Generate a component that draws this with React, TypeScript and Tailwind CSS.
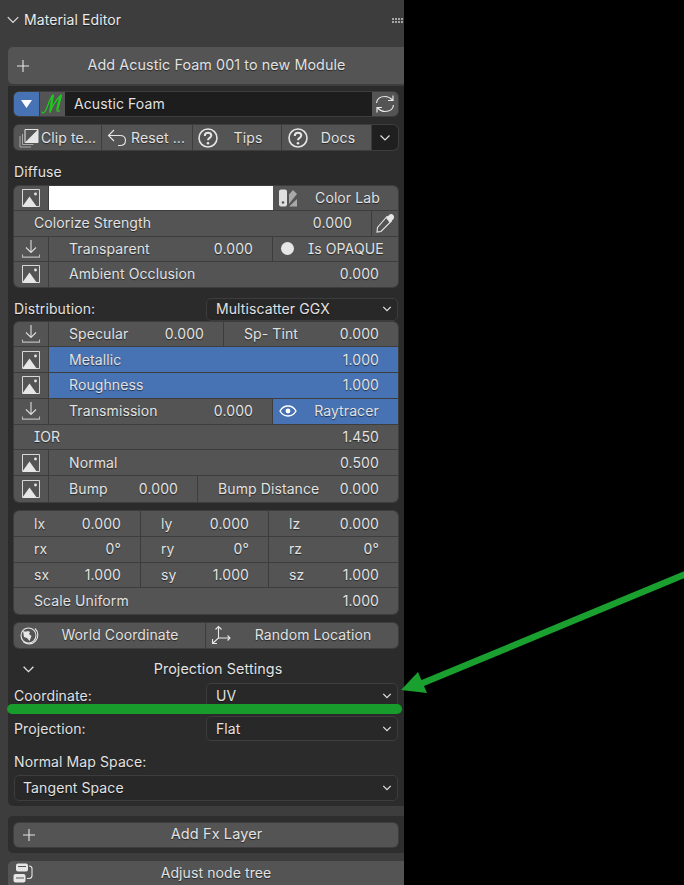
import { ReactNode } from "react"

const shadow = "[text-shadow:0_1px_1px_rgba(0,0,0,0.55)]"

const ImageIcon = () => (
    <svg width="18" height="18" viewBox="0 0 18 18" fill="none">
        <path d="M.5 17V.5h17v17h-4" stroke="#e6e6e6" strokeWidth="1" opacity="0.9" />
        <path d="M0 18 L7.500 7.500 L15 18 Z" fill="#e6e6e6" />
        <circle cx="13.500" cy="5" r="1.400" fill="#e6e6e6" />
    </svg>
)

const ImportIcon = () => (
    <svg width="20" height="20" viewBox="0 0 20 20" fill="none" stroke="#dcdcdc" strokeWidth="1.1">
        <path d="M10 1V13M5 8.500 10 13.500l5-5" />
        <path d="M1.500 15.500v2.600h17v-2.600" opacity="0.75" />
    </svg>
)

const HelpIcon = () => (
    <svg width="20" height="20" viewBox="0 0 20 20" fill="none" stroke="#e6e6e6" strokeWidth="1.6">
        <circle cx="10" cy="10" r="9" />
        <path d="M6.800 8c0-2 1.400-3.200 3.300-3.200s3.200 1.200 3.200 2.800c0 2.300-3.300 2.300-3.300 4.700" strokeWidth="2" />
        <circle cx="10" cy="15.200" r="1.300" fill="#e6e6e6" stroke="none" />
    </svg>
)

const Chevron = ({ size = 12, sw = 1.3 }: { size?: number; sw?: number }) => (
    <svg width={size} height={size} viewBox="0 0 12 12" fill="none" stroke="#e0e0e0" strokeWidth={sw}>
        <path d="M1.500 3.500 6 8l4.500-4.500" />
    </svg>
)

const Plus = () => (
    <svg width="12" height="12" viewBox="0 0 12 12" stroke="#e6e6e6" strokeWidth="1.1">
        <path d="M6 0v12M0 6h12" />
    </svg>
)

function Field({ label, value, className = "flex-1", active }: { label: string; value: string; className?: string; active?: boolean }) {
    return (
        <div className={`${className} flex h-full min-w-0 items-center justify-between pl-[20px] pr-[19px] ${active ? "bg-[#4772b3]" : ""}`}>
            <span>{label}</span>
            <span>{value}</span>
        </div>
    )
}

function IconCell({ children }: { children: ReactNode }) {
    return <div className="flex h-full w-[35px] shrink-0 items-center justify-center border-r border-[#3d3d3d]">{children}</div>
}

function Row({ h, last, children }: { h: string; last?: boolean; children: ReactNode }) {
    return <div className={`flex items-center bg-[#545454] ${h} ${last ? "" : "border-b border-[#3d3d3d]"}`}>{children}</div>
}

function Group({ className = "", children }: { className?: string; children: ReactNode }) {
    return <div className={`mx-[6px] overflow-hidden rounded-[5px] shadow-[0_0_0_1px_#3d3d3d] ${className}`}>{children}</div>
}

function Select({ value, className = "" }: { value: string; className?: string }) {
    return (
        <div className={`flex items-center justify-between rounded-[5px] border border-[#3d3d3d] bg-[#282828] pl-[9px] pr-[5px] ${className}`}>
            <span>{value}</span>
            <Chevron size={10} sw={1.5} />
        </div>
    )
}

function ToolButton({ icon, text, className, textClass }: { icon: ReactNode; text: string; className: string; textClass: string }) {
    return (
        <div className={`flex h-full items-center border-r border-[#3d3d3d] pl-[5px] ${className}`}>
            <span className="w-[20px] shrink-0">{icon}</span>
            <span className={`whitespace-nowrap ${textClass}`}>{text}</span>
        </div>
    )
}

export default function App() {
    return (
        <div className={`relative h-[885px] w-[684px] overflow-hidden bg-black font-[family-name:Inter,sans-serif] text-[14px] leading-none tracking-[0.1px] text-[#e2e2e2] [font-feature-settings:'cv08'] ${shadow}`}>
            <div className="flex h-full w-[404px] flex-col bg-[#3d3d3d] pl-[8px]">
                {/* panel header */}
                <div className="-ml-[8px] flex h-[40px] shrink-0 items-center pl-[6px] pr-[1px]">
                    <Chevron size={14} sw={1} />
                    <span className="ml-[4px] text-[14px] text-[#ececec]">Material Editor</span>
                    <div className="ml-auto grid grid-cols-4 gap-[1px]">
                        {Array.from({ length: 8 }).map((_, i) => (
                            <span key={i} className="h-[2px] w-[2px] bg-[#a5a5a5]" />
                        ))}
                    </div>
                </div>

                <div className="mt-[7px] flex h-[37px] shrink-0 items-center rounded-l-[5px] bg-[#545454] pl-[9px]">
                    <Plus />
                    <span className="flex-1 text-center text-[14.300px]">Add Acustic Foam 001 to new Module</span>
                </div>

                <div className="mt-[2px] flex h-[720px] shrink-0 flex-col rounded-bl-[5px] bg-[#2b2b2b] pt-[6px]">
                    {/* material name */}
                    <div className="mx-[6px] flex h-[24px] shrink-0 overflow-hidden rounded-[5px] bg-[#545454] shadow-[0_0_0_1px_#3d3d3d]">
                        <div className="flex w-[25px] items-center justify-center bg-[#4772b3]">
                            <svg width="11" height="8" viewBox="0 0 11 8"><path d="M0 0h11L5.500 8z" fill="#fff" /></svg>
                        </div>
                        <div className="flex w-[26px] items-center justify-center border-l border-[#3d3d3d]">
                            <svg width="23" height="22" viewBox="0 0 23 22" fill="none" stroke="#1ec81e" strokeWidth="1.300" strokeLinecap="round">
                                <path d="M1 19c.5 1.500 2 1 3-.5C7 14 8 6 12 2c-1.500 5-2.500 10-3 17" />
                                <path d="M9 19c2-5 6-12 11-17-1.500 4-3.500 10-4 15 0 1.500 1 2 2.500 .5" />
                                <path d="M12 2.500 9.500 17M20 2.500 16.500 16" strokeWidth="2" />
                            </svg>
                        </div>
                        <div className="flex flex-1 items-center bg-[#1d1d1d] pl-[9px]">Acustic Foam</div>
                        <div className="flex w-[26px] items-center justify-center">
                            <svg width="20" height="20" viewBox="0 0 20 20" fill="none" stroke="#e6e6e6" strokeWidth="1.2">
                                <path d="M1.500 9C2 5 5 2.500 10 2.500c3 0 5 1 7.500 3.500M18 1.500V6.500H13" />
                                <path d="M18.500 11C18 15 15 17.500 10 17.500c-3 0-5-1-7.500-3.500M2 18.500V13.500H7" />
                            </svg>
                        </div>
                    </div>

                    {/* tool buttons */}
                    <div className="mx-[6px] mt-[9px] flex h-[25px] shrink-0 overflow-hidden rounded-[5px] bg-[#545454] shadow-[0_0_0_1px_#3d3d3d]">
                        <ToolButton
                            className="w-[88px]"
                            textClass="ml-[2px]"
                            text="Clip te..."
                            icon={
                                <svg width="20" height="20" viewBox="0 0 20 20" fill="none" stroke="#cfcfcf" strokeWidth="1">
                                    <path d="M1 8v11h11M3.500 6v10.500h11" opacity="0.7" />
                                    <path d="M6 1.500h13v13H6z" fill="#545454" stroke="#e6e6e6" />
                                    <path d="M6 14.500 19 1.500v13z" fill="#e6e6e6" stroke="none" />
                                </svg>
                            }
                        />
                        <ToolButton
                            className="w-[91px]"
                            textClass="ml-[4px]"
                            text="Reset ..."
                            icon={
                                <svg width="20" height="20" viewBox="0 0 20 20" fill="none" stroke="#e6e6e6" strokeWidth="1.1">
                                    <path d="M7 2 1.500 7.500 7 13M1.500 7.500H13c3.500 0 5.500 2 5.500 5s-2 5-5.500 5h-2" />
                                </svg>
                            }
                        />
                        <ToolButton className="w-[89px]" textClass="flex-1 pr-[3px] text-center" text="Tips" icon={<HelpIcon />} />
                        <ToolButton className="w-[90px] pl-[6px]" textClass="flex-1 pr-[3px] text-center" text="Docs" icon={<HelpIcon />} />
                        <div className="flex flex-1 items-center justify-center bg-[#1f1f1f]">
                            <Chevron size={12} sw={1.2} />
                        </div>
                    </div>

                    <div className="ml-[6px] mt-[15px] flex h-[14px] shrink-0 items-center">Diffuse</div>

                    <Group className="mt-[7px] shrink-0">
                        <Row h="h-[25.250px]">
                            <IconCell><ImageIcon /></IconCell>
                            <div className="h-full w-[224px] bg-white" />
                            <div className="flex h-full flex-1 items-center pl-[5px]">
                                <svg width="20" height="20" viewBox="0 0 20 20">
                                    <rect x="1" y="1.500" width="8" height="17" rx="2" fill="#e0e0e0" />
                                    <circle cx="5" cy="14.500" r="1.300" fill="#545454" />
                                    <path d="M11 6.500 15 2l4 4-8 10z" fill="#a8a8a8" />
                                    <path d="M11 18.500 19 11v7.500z" fill="#a8a8a8" />
                                </svg>
                                <span className="flex-1 pr-[1px] text-center">Color Lab</span>
                            </div>
                        </Row>
                        <Row h="h-[25.250px]">
                            <div className="flex h-full flex-1 items-center justify-between border-r border-[#3d3d3d] pl-[20px] pr-[19px]">
                                <span>Colorize Strength</span>
                                <span>0.000</span>
                            </div>
                            <div className="flex w-[26px] items-center justify-center">
                                <svg width="20" height="20" viewBox="0 0 20 20" fill="none">
                                    <path d="M12 3.500 16.500 8 6 18.500 2 19l.5-4.500z" stroke="#e6e6e6" strokeWidth="1.100" />
                                    <path d="M11 5c2-1 3-4 5-4s3.500 2 3 4-3 2.500-4 5z" fill="#e6e6e6" />
                                </svg>
                            </div>
                        </Row>
                        <Row h="h-[25.250px]">
                            <IconCell><ImportIcon /></IconCell>
                            <Field label="Transparent" value="0.000" className="w-[224px] shrink-0 border-r border-[#3d3d3d]" />
                            <div className="flex flex-1 items-center pl-[8px]">
                                <span className="h-[13px] w-[13px] rounded-full bg-[#e6e6e6]" />
                                <span className="ml-[14px]">Is OPAQUE</span>
                            </div>
                        </Row>
                        <Row h="h-[25.250px]" last>
                            <IconCell><ImageIcon /></IconCell>
                            <Field label="Ambient Occlusion" value="0.000" />
                        </Row>
                    </Group>

                    <div className="mx-[6px] mt-[10.500px] flex h-[23.500px] shrink-0 items-center">
                        <span className="w-[192px]">Distribution:</span>
                        <Select value="Multiscatter GGX" className="h-full flex-1" />
                    </div>

                    <Group className="mt-[.5px] shrink-0">
                        <Row h="h-[25.800px]">
                            <IconCell><ImportIcon /></IconCell>
                            <Field label="Specular" value="0.000" className="w-[175px] shrink-0 border-r border-[#3d3d3d]" />
                            <Field label="Sp- Tint" value="0.000" />
                        </Row>
                        <Row h="h-[25.800px]">
                            <IconCell><ImageIcon /></IconCell>
                            <Field label="Metallic" value="1.000" active />
                        </Row>
                        <Row h="h-[25.800px]">
                            <IconCell><ImageIcon /></IconCell>
                            <Field label="Roughness" value="1.000" active />
                        </Row>
                        <Row h="h-[25.800px]">
                            <IconCell><ImportIcon /></IconCell>
                            <Field label="Transmission" value="0.000" className="w-[224px] shrink-0 border-r border-[#3d3d3d]" />
                            <div className="flex h-full flex-1 items-center bg-[#4772b3] pl-[6px]">
                                <svg width="18" height="14" viewBox="0 0 18 14" fill="none" stroke="#fff" strokeWidth="1.400">
                                    <path d="M1 7c2-3.500 5-5 8-5s6 1.500 8 5c-2 3.500-5 5-8 5S3 10.500 1 7z" />
                                    <circle cx="9" cy="7" r="2.400" fill="#fff" stroke="none" />
                                </svg>
                                <span className="flex-1 pr-[2px] text-center">Raytracer</span>
                            </div>
                        </Row>
                        <Row h="h-[25.800px]">
                            <Field label="IOR" value="1.450" />
                        </Row>
                        <Row h="h-[25.800px]">
                            <IconCell><ImageIcon /></IconCell>
                            <Field label="Normal" value="0.500" />
                        </Row>
                        <Row h="h-[25.800px]" last>
                            <IconCell><ImageIcon /></IconCell>
                            <Field label="Bump" value="0.000" className="w-[149px] shrink-0 border-r border-[#3d3d3d]" />
                            <Field label="Bump Distance" value="0.000" />
                        </Row>
                    </Group>

                    <Group className="mt-[9.200px] shrink-0">
                        {[
                            ["lx", "0.000", "ly", "0.000", "lz", "0.000"],
                            ["rx", "0°", "ry", "0°", "rz", "0°"],
                            ["sx", "1.000", "sy", "1.000", "sz", "1.000"],
                        ].map((r) => (
                            <Row key={r[0]} h="h-[25.700px]">
                                <Field label={r[0]} value={r[1]} className="w-[127px] shrink-0 border-r border-[#3d3d3d]" />
                                <Field label={r[2]} value={r[3]} className="w-[128px] shrink-0 border-r border-[#3d3d3d]" />
                                <Field label={r[4]} value={r[5]} />
                            </Row>
                        ))}
                        <Row h="h-[25.700px]" last>
                            <Field label="Scale Uniform" value="1.000" />
                        </Row>
                    </Group>

                    <div className="mx-[6px] mt-[8.500px] flex h-[25px] shrink-0 overflow-hidden rounded-[5px] bg-[#545454] shadow-[0_0_0_1px_#3d3d3d]">
                        <div className="flex h-full w-[192px] items-center border-r border-[#3d3d3d] pl-[5px]">
                            <svg width="20" height="20" viewBox="0 0 20 20" fill="none" stroke="#e6e6e6" strokeWidth="1.100">
                                <path d="M16 3.500A8.800 8.800 0 1 1 4 16.500" />
                                <circle cx="9.500" cy="10.500" r="7.500" />
                                <path d="M4 6c2 .5 3 1 5 0l2 1-1 2 2.500 2-2 5-2.500-3-3-1-.5-3z" fill="#e6e6e6" stroke="none" />
                            </svg>
                            <span className="flex-1 pr-[4px] text-center">World Coordinate</span>
                        </div>
                        <div className="flex h-full flex-1 items-center pl-[5px]">
                            <svg width="20" height="20" viewBox="0 0 20 20" fill="none" stroke="#e6e6e6" strokeWidth="1.100">
                                <path d="M7.500 13V2M4.500 4.500l3-3 3 3M7.500 13H19M16.500 10.500l2.500 2.500-2.500 2.500M7.500 13l-5.500 5M1.500 14v4.500H6" />
                            </svg>
                            <span className="flex-1 pr-[3px] text-center">Random Location</span>
                        </div>
                    </div>

                    <div className="mt-[14.500px] flex h-[14px] shrink-0 items-center pl-[14px]">
                        <Chevron size={13} sw={1.200} />
                        <span className="flex-1 pr-[3px] text-center text-[14.300px]">Projection Settings</span>
                    </div>

                    <div className="mx-[6px] mt-[7px] flex h-[25px] shrink-0 items-center">
                        <span className="w-[192px]">Coordinate:</span>
                        <Select value="UV" className="h-full flex-1" />
                    </div>

                    <div className="mx-[6px] mt-[8px] flex h-[25px] shrink-0 items-center">
                        <span className="w-[192px]">Projection:</span>
                        <Select value="Flat" className="h-full flex-1" />
                    </div>

                    <div className="ml-[6px] mt-[14px] flex h-[14px] shrink-0 items-center">Normal Map Space:</div>
                    <Select value="Tangent Space" className="mx-[6px] mt-[6px] h-[26px] shrink-0 !pl-[8px]" />
                </div>

                <div className="mt-[10px] flex h-[37px] shrink-0 items-center rounded-l-[5px] bg-[#2e2e2e] px-[6px]">
                    <div className="flex h-[24px] flex-1 items-center rounded-[5px] bg-[#545454] pl-[9px] shadow-[0_0_0_1px_#3d3d3d]">
                        <Plus />
                        <span className="flex-1 pb-[1px] text-center text-[14.500px]">Add Fx Layer</span>
                    </div>
                </div>

                <div className="mt-[8px] flex h-[24px] shrink-0 items-center rounded-tl-[5px] bg-[#545454] pl-[5px]">
                    <svg width="20" height="20" viewBox="0 0 20 20" fill="none">
                        <rect x="3" y="0.500" width="12" height="8" rx="2" fill="#e6e6e6" />
                        <rect x="0.500" y="11" width="12" height="8.500" rx="2" fill="#e6e6e6" />
                        <path d="M5 3.500h8M3 15h8" stroke="#545454" strokeWidth="1" />
                        <path d="M16 3c2 0 3 1 3 2.500v7c0 2-1 3-3 3h-2" stroke="#e6e6e6" strokeWidth="1.100" />
                    </svg>
                    <span className="flex-1 pr-[5px] text-center">Adjust node tree</span>
                </div>
            </div>

            {/* annotation: green underline and arrow drawn over the screenshot */}
            <div className="absolute left-[7px] top-[704px] h-[10px] w-[395px] rounded-full bg-[#189c2b]" />
            <svg className="absolute left-0 top-0" width="684" height="885" viewBox="0 0 684 885" fill="none">
                <path d="M686 574 418 685" stroke="#1aa02f" strokeWidth="6.500" />
                <path d="M401 690 418 672 427 693z" fill="#1aa02f" />
            </svg>
        </div>
    )
}
